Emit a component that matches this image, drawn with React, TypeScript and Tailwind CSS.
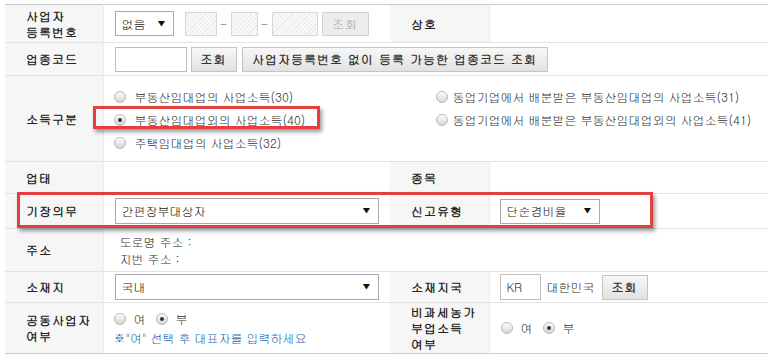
import React from 'react'

const font = { fontFamily: '"Gulim", "Noto Sans CJK KR", "Noto Sans", sans-serif' }

function Radio({ checked = false }: { checked?: boolean }) {
  return (
    <span className="inline-flex items-center justify-center w-[12px] h-[12px] rounded-full border border-[#b8b8b8] bg-gradient-to-b from-[#fdfdfd] to-[#d6d6d6] shrink-0">
      {checked && <span className="w-[4px] h-[4px] rounded-full bg-[#333]" />}
    </span>
  )
}

function RadioItem({ label, checked = false, gap = 'gap-[9px]' }: { label: string; checked?: boolean; gap?: string }) {
  return (
    <label className={`flex items-center ${gap} text-[12px] text-[#333] whitespace-nowrap`}>
      <Radio checked={checked} />
      <span>{label}</span>
    </label>
  )
}

function Select({ value, className }: { value: string; className: string }) {
  return (
    <div className={`flex items-center justify-between border border-[#a9a9a9] bg-white pl-[6px] pr-[7px] text-[12px] text-[#222] ${className}`}>
      <span>{value}</span>
      <span className="text-[9px] text-[#111]">▼</span>
    </div>
  )
}

function Btn({ children, className = '' }: { children: React.ReactNode; className?: string }) {
  return (
    <button className={`h-[25px] whitespace-nowrap border border-[#c4c4c4] bg-gradient-to-b from-[#f7f7f7] to-[#e2e2e2] text-[12px] font-bold tracking-[1px] text-[#333] ${className}`}>
      {children}
    </button>
  )
}

const hatch =
  'h-[24px] border border-[#d6d6d6] bg-[repeating-linear-gradient(135deg,#f9f9f9_0px,#f9f9f9_2px,#e9e9e9_2px,#e9e9e9_3px)]'

function Th({ children }: { children: React.ReactNode }) {
  return (
    <td className="bg-[#f6f6f6] pl-[21px] text-[12px] font-bold tracking-[1px] leading-[16px] text-[#222] align-middle border-r border-[#ececec]">
      {children}
    </td>
  )
}

export default function App() {
  return (
    <div className="relative w-[776px] h-[360px] bg-white overflow-hidden pt-[4px] pl-[5px]" style={font}>
      <table className="w-[763px] table-fixed border-collapse border-t border-b border-[#c9c9c9]">
        <colgroup>
          <col className="w-[98px]" />
          <col className="w-[287px]" />
          <col className="w-[99px]" />
          <col className="w-[279px]" />
        </colgroup>
        <tbody>
          <tr className="h-[38px] border-b border-[#e2e2e2]">
            <Th>사업자<br />등록번호</Th>
            <td className="pl-[11px]">
              <div className="flex items-center text-[12px] text-[#555]">
                <Select value="없음" className="w-[59px] h-[25px]" />
                <div className={`${hatch} w-[32px] ml-[11px]`} />
                <span className="w-[14px] text-center">-</span>
                <div className={`${hatch} w-[27px]`} />
                <span className="w-[14px] text-center">-</span>
                <div className={`${hatch} w-[46px]`} />
                <button className="ml-[4px] h-[24px] w-[47px] whitespace-nowrap border border-[#d2d2d2] bg-[#ededed] text-[12px] tracking-[1px] text-[#a8a8a8]">
                  조회
                </button>
              </div>
            </td>
            <Th>상호</Th>
            <td />
          </tr>
          <tr className="h-[33px] border-b border-[#e2e2e2]">
            <Th>업종코드</Th>
            <td colSpan={3} className="pl-[11px]">
              <div className="flex items-center">
                <div className="w-[72px] h-[25px] border border-[#bdbdbd] bg-white" />
                <Btn className="ml-[4px] w-[46px]">조회</Btn>
                <Btn className="ml-[5px] w-[306px]">사업자등록번호 없이 등록 가능한 업종코드 조회</Btn>
              </div>
            </td>
          </tr>
          <tr className="h-[86px] border-b border-[#e2e2e2]">
            <Th>소득구분</Th>
            <td colSpan={3} className="pl-[10px] align-top pt-[9px]">
              <div className="flex">
                <div className="w-[322px] flex flex-col">
                  <div className="h-[23px] flex items-center"><RadioItem label="부동산임대업의 사업소득(30)" /></div>
                  <div className="h-[23px] flex items-center"><RadioItem label="부동산임대업외의 사업소득(40)" checked /></div>
                  <div className="h-[23px] flex items-center"><RadioItem label="주택임대업의 사업소득(32)" /></div>
                </div>
                <div className="flex flex-col">
                  <div className="h-[23px] flex items-center"><RadioItem label="동업기업에서 배분받은 부동산임대업의 사업소득(31)" gap="gap-[5px]" /></div>
                  <div className="h-[23px] flex items-center"><RadioItem label="동업기업에서 배분받은 부동산임대업외의 사업소득(41)" gap="gap-[5px]" /></div>
                </div>
              </div>
            </td>
          </tr>
          <tr className="h-[32px] border-b border-[#e2e2e2]">
            <Th>업태</Th>
            <td />
            <Th>종목</Th>
            <td />
          </tr>
          <tr className="h-[35px] border-b border-[#e2e2e2]">
            <Th>기장의무</Th>
            <td className="pl-[11px]">
              <Select value="간편장부대상자" className="w-[264px] h-[26px]" />
            </td>
            <Th>신고유형</Th>
            <td className="pl-[10px]">
              <Select value="단순경비율" className="w-[100px] h-[25px]" />
            </td>
          </tr>
          <tr className="h-[43px] border-b border-[#e2e2e2]">
            <Th>주소</Th>
            <td colSpan={3} className="pl-[16px] text-[12px] leading-[17px] text-[#333]">
              <div>도로명 주소 :</div>
              <div>지번 주소 :</div>
            </td>
          </tr>
          <tr className="h-[31px] border-b border-[#e2e2e2]">
            <Th>소재지</Th>
            <td className="pl-[11px]">
              <Select value="국내" className="w-[264px] h-[26px]" />
            </td>
            <Th>소재지국</Th>
            <td className="pl-[10px]">
              <div className="flex items-center text-[12px] text-[#333]">
                <div className="w-[41px] h-[26px] border border-[#bdbdbd] bg-white flex items-center pl-[6px]">KR</div>
                <span className="ml-[6px]">대한민국</span>
                <Btn className="ml-[7px] w-[46px]">조회</Btn>
              </div>
            </td>
          </tr>
          <tr className="h-[51px]">
            <Th>공동사업자<br />여부</Th>
            <td className="pl-[10px]">
              <div className="flex items-center gap-[10px] h-[20px]">
                <RadioItem label="여" gap="gap-[8px]" />
                <RadioItem label="부" checked gap="gap-[8px]" />
              </div>
              <div className="text-[12px] text-[#1f6aae] leading-[18px]">※"여" 선택 후 대표자를 입력하세요</div>
            </td>
            <Th>비과세농가<br />부업소득<br />여부</Th>
            <td className="pl-[11px]">
              <div className="flex items-center gap-[10px]">
                <RadioItem label="여" gap="gap-[8px]" />
                <RadioItem label="부" checked gap="gap-[8px]" />
              </div>
            </td>
          </tr>
        </tbody>
      </table>

      {/* 강조 표시 박스 */}
      <div className="absolute left-[93px] top-[106px] w-[227px] h-[23px] border-[3px] border-[#e2403f] shadow-[2px_3px_4px_rgba(0,0,0,0.4)]" />
      <div className="absolute left-[17px] top-[192px] w-[636px] h-[36px] border-[3px] border-[#e2403f] shadow-[2px_3px_4px_rgba(0,0,0,0.4)]" />
    </div>
  )
}
